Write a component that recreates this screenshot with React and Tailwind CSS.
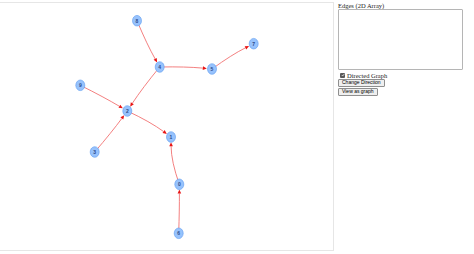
import React from 'react';

const nodes = {
  0: [179.3, 184.3],
  1: [171, 137],
  2: [127.3, 111],
  3: [94.7, 152],
  4: [159.7, 67],
  5: [212, 69],
  6: [178.7, 233.3],
  7: [253.7, 43.7],
  8: [137, 20.7],
  9: [80.3, 85.3],
};

// [from, to, bend]
const edges = [
  [8, 4, 1.5],
  [4, 5, -1.5],
  [5, 7, -2],
  [4, 2, 1.5],
  [9, 2, -1],
  [3, 2, 1],
  [2, 1, -2.5],
  [0, 1, -4],
  [6, 0, 0.5],
];

function Edge({ from, to, bend }) {
  const [x1, y1] = nodes[from];
  const [x2, y2] = nodes[to];
  const dx = x2 - x1;
  const dy = y2 - y1;
  const len = Math.hypot(dx, dy);
  const ux = dx / len;
  const uy = dy / len;
  // control point pushed sideways
  const cx = (x1 + x2) / 2 - uy * bend;
  const cy = (y1 + y2) / 2 + ux * bend;
  // direction from control point to target for the arrow
  const tdx = x2 - cx;
  const tdy = y2 - cy;
  const tl = Math.hypot(tdx, tdy);
  const tx = tdx / tl;
  const ty = tdy / tl;
  const r = 5.2;
  const ex = x2 - tx * r;
  const ey = y2 - ty * r;
  const bx = ex - tx * 4;
  const by = ey - ty * 4;
  const px = -ty * 1.8;
  const py = tx * 1.8;
  return (
    <g>
      <path
        d={`M${x1} ${y1} Q${cx} ${cy} ${bx} ${by}`}
        fill="none"
        stroke="#f27272"
        strokeWidth="0.9"
      />
      <polygon
        points={`${ex},${ey} ${bx + px},${by + py} ${bx - px},${by - py}`}
        fill="#e81414"
      />
    </g>
  );
}

export default function App() {
  return (
    <div className="flex items-start bg-white w-[474px] h-[254px] overflow-hidden">
      <div className="w-[334px] h-[249px] mt-[2px] border-y border-r border-[#e6e6e6] shrink-0">
        <svg width="333" height="247" viewBox="0 3 333 247" className="block">
          {edges.map(([a, b, bend]) => (
            <Edge key={`${a}-${b}`} from={a} to={b} bend={bend} />
          ))}
          {Object.entries(nodes).map(([id, [x, y]]) => (
            <g key={id}>
              <ellipse cx={x} cy={y} rx="4.5" ry="5.3" fill="#97c2fc" stroke="#5b9af0" strokeWidth="0.6" />
              <text
                x={x}
                y={y + 1.8}
                textAnchor="middle"
                fontSize="5"
                fontWeight="bold"
                fill="#2c4a8a"
                fontFamily="'Liberation Sans', Arial, sans-serif"
              >
                {id}
              </text>
            </g>
          ))}
        </svg>
      </div>

      <div className="flex flex-col items-start pl-[4px] pt-[2px] font-['Liberation_Serif',serif] text-[6.5px] leading-[7px] text-[#222]">
        <span>Edges (2D Array)</span>
        <textarea className="block w-[125px] h-[61px] border border-[#b5b5b5] rounded-[1px] resize-none bg-white" />
        <div className="flex items-center gap-[2px] mt-[2px] ml-[2px] h-[6px]">
          <span className="w-[5px] h-[5px] bg-[#5a5a5a] rounded-[1px] flex items-center justify-center">
            <svg width="4" height="4" viewBox="0 0 10 10">
              <path d="M2 5.2 L4.2 7.4 L8.2 2.6" fill="none" stroke="#fff" strokeWidth="1.8" />
            </svg>
          </span>
          <span>Directed Graph</span>
        </div>
        <button className="mt-[1px] h-[7.5px] px-[3px] border border-[#8f8f8f] bg-[#efefef] rounded-[1px] font-['Liberation_Sans',Arial,sans-serif] text-[5px] leading-[5px] text-black">
          Change Direction
        </button>
        <button className="mt-[1.5px] h-[7.5px] px-[3px] border border-[#8f8f8f] bg-[#efefef] rounded-[1px] font-['Liberation_Sans',Arial,sans-serif] text-[5px] leading-[5px] text-black">
          View as graph
        </button>
      </div>
    </div>
  );
}
